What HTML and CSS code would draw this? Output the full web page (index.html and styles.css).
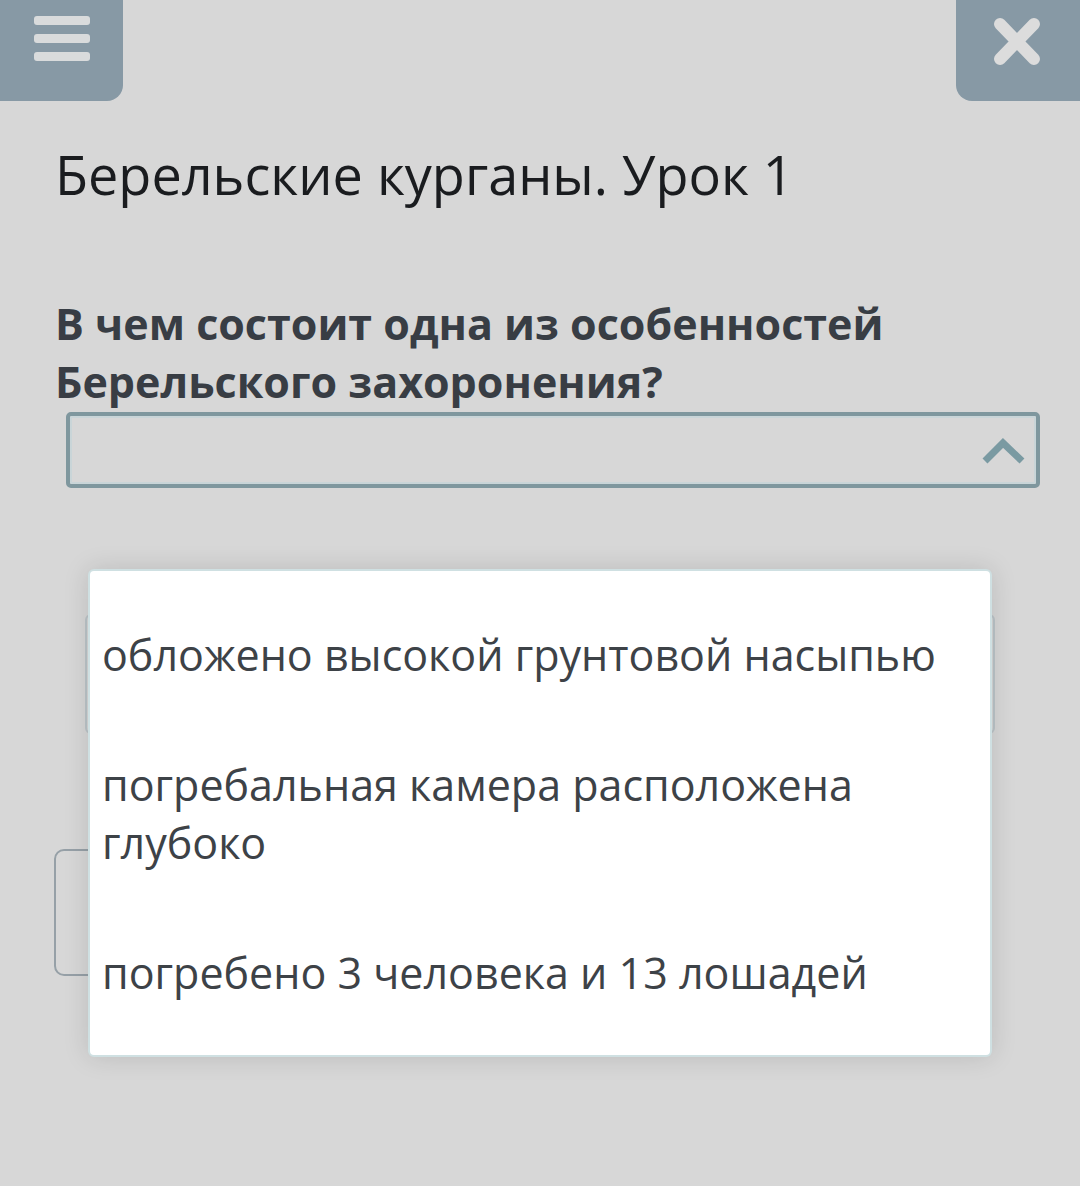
FILE: index.html
```html
<!DOCTYPE html>
<html lang="ru">
<head>
<meta charset="utf-8">
<title>Берельские курганы. Урок 1</title>
<link rel="stylesheet" href="styles.css">
</head>
<body>
<div class="page">
  <header class="topbar">
    <button class="btn btn-menu" aria-label="Меню">
      <span class="bar"></span><span class="bar"></span><span class="bar"></span>
    </button>
    <button class="btn btn-close" aria-label="Закрыть">
      <svg class="close-icon" width="124" height="101" viewBox="0 0 124 101">
        <path d="M44 24 L78 59 M78 24 L44 59" stroke="#dcdcdc" stroke-width="12" stroke-linecap="round" fill="none"/>
      </svg>
    </button>
  </header>
  <main class="content">
    <h1 class="title">Берельские курганы. Урок 1</h1>
    <h2 class="question">В чем состоит одна из особенностей Берельского захоронения?</h2>
    <div class="select">
      <svg class="chevron" width="44" height="30" viewBox="0 0 44 30">
        <polyline points="3,24 21,6 40,24" stroke="#7a9aa2" stroke-width="7" fill="none"/>
      </svg>
    </div>
    <div class="under-field"></div>
    <div class="under-button"></div>
  </main>
  <ul class="dropdown">
    <li class="option">обложено высокой грунтовой насыпью</li>
    <li class="option">погребальная камера расположена глубоко</li>
    <li class="option">погребено 3 человека и 13 лошадей</li>
  </ul>
</div>
</body>
</html>
```

FILE: styles.css
```css
html, body {
  margin: 0;
  padding: 0;
  background: #d7d7d7;
  font-family: "Open Sans", "Noto Sans", sans-serif;
}

.page {
  position: relative;
  width: 1080px;
  height: 1186px;
  overflow: hidden;
}

.topbar {
  display: flex;
  justify-content: space-between;
  height: 101px;
}

.btn {
  border: 0;
  padding: 0;
  margin: 0;
  background: #8799a5;
  height: 101px;
  cursor: pointer;
}

.btn-menu {
  width: 123px;
  border-bottom-right-radius: 16px;
  display: flex;
  flex-direction: column;
  align-items: flex-start;
  gap: 9px;
  padding: 16px 0 0 34px;
  box-sizing: border-box;
}

.bar {
  display: block;
  width: 56px;
  height: 9px;
  border-radius: 3px;
  background: #d9dbdc;
}

.btn-close {
  width: 124px;
  border-bottom-left-radius: 16px;
}

.close-icon {
  display: block;
}

.content {
  padding: 0 0 0 55px;
}

.title {
  margin: 42px 0 0 0;
  font-size: 54px;
  line-height: 62px;
  font-weight: 400;
  color: #1a1c1f;
}

.question {
  margin: 90px 0 0 0;
  width: 940px;
  font-size: 43px;
  line-height: 58px;
  font-weight: 700;
  color: #383d44;
}

.select {
  margin: 1px 0 0 11px;
  width: 974px;
  height: 76px;
  box-sizing: border-box;
  border: 4px solid #7f979e;
  box-shadow: inset 0 0 0 2px #c9d5d8;
  border-radius: 5px;
  background: #d7d7d7;
  display: flex;
  justify-content: flex-end;
  align-items: flex-start;
  padding: 21px 10px 0 0;
}

.chevron {
  display: block;
}

.under-field {
  margin: 126px 0 0 30px;
  width: 910px;
  height: 120px;
  box-sizing: border-box;
  border: 2px solid #bcc4c8;
  border-radius: 6px;
}

.under-button {
  margin: 115px 0 0 -1px;
  width: 400px;
  height: 127px;
  box-sizing: border-box;
  border: 2px solid #96a0a7;
  border-radius: 10px;
}

.dropdown {
  position: absolute;
  left: 88px;
  top: 569px;
  width: 904px;
  height: 488px;
  box-sizing: border-box;
  margin: 0;
  padding: 19px 0 0 0;
  list-style: none;
  background: #ffffff;
  border: 2px solid #cfe0e2;
  border-radius: 6px;
  box-shadow: 0 0 26px rgba(0, 0, 0, 0.13);
}

.option {
  padding: 36px 12px;
  font-size: 43px;
  line-height: 58px;
  font-weight: 400;
  color: #3d4247;
}
```
